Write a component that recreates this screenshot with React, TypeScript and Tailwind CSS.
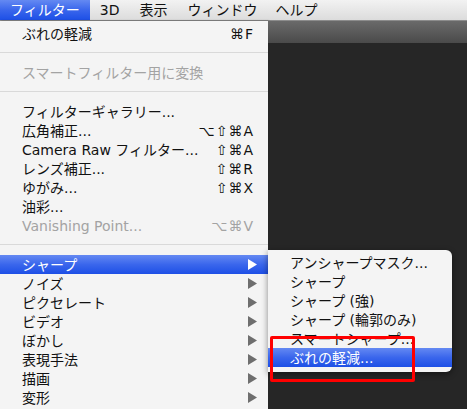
import React from "react";

type Item =
  | { sep: true }
  | { label: string; shortcut?: string; disabled?: boolean; sub?: boolean; active?: boolean; sep?: false };

const mainItems: Item[] = [
  { label: "ぶれの軽減", shortcut: "⌘F" },
  { sep: true },
  { label: "スマートフィルター用に変換", disabled: true },
  { sep: true },
  { label: "フィルターギャラリー..." },
  { label: "広角補正...", shortcut: "⌥⇧⌘A" },
  { label: "Camera Raw フィルター...", shortcut: "⇧⌘A" },
  { label: "レンズ補正...", shortcut: "⇧⌘R" },
  { label: "ゆがみ...", shortcut: "⇧⌘X" },
  { label: "油彩..." },
  { label: "Vanishing Point...", shortcut: "⌥⌘V", disabled: true },
  { sep: true },
  { label: "シャープ", sub: true, active: true },
  { label: "ノイズ", sub: true },
  { label: "ピクセレート", sub: true },
  { label: "ビデオ", sub: true },
  { label: "ぼかし", sub: true },
  { label: "表現手法", sub: true },
  { label: "描画", sub: true },
  { label: "変形", sub: true },
];

const subItems = [
  { label: "アンシャープマスク..." },
  { label: "シャープ" },
  { label: "シャープ (強)" },
  { label: "シャープ (輪郭のみ)" },
  { label: "スマートシャープ..." },
  { label: "ぶれの軽減...", active: true },
];

const font = { fontFamily: '"DejaVu Sans", "Noto Sans CJK JP", sans-serif' };
const blue = "bg-[linear-gradient(180deg,#6489f2_0%,#3a66ec_50%,#1d4fe6_100%)]";

function Arrow({ white }: { white?: boolean }) {
  return (
    <svg width="9" height="11" viewBox="0 0 9 11">
      <path d="M0 0 L9 5.5 L0 11 Z" fill={white ? "#ffffff" : "#6e6e6e"} />
    </svg>
  );
}

function MainMenu() {
  return (
    <div className="w-[268px] shrink-0 bg-[#f4f4f4] pt-[3px] shadow-[1px_0_2px_rgba(0,0,0,0.4)]">
      {mainItems.map((it, i) =>
        it.sep ? (
          <div key={i} className="h-[20px] pt-[9px]">
            <div className="h-px bg-[#d9d9d9]" />
          </div>
        ) : (
          <div
            key={i}
            className={`flex h-[19px] items-center pl-[22px] pr-[11px] text-[14px] leading-none ${
              it.active ? `${blue} text-white` : it.disabled ? "text-[#a3a3a3]" : "text-[#111]"
            }`}
          >
            <span className="flex-1 whitespace-nowrap">{it.label}</span>
            {it.shortcut && <span className="whitespace-nowrap pr-[3px] tracking-[1px]">{it.shortcut}</span>}
            {it.sub && <Arrow white={it.active} />}
          </div>
        )
      )}
    </div>
  );
}

function SubMenu() {
  return (
    <div className="absolute left-[268px] top-[250px] w-[184px] rounded-r-[6px] bg-[#f4f4f4] pt-[3px] pb-[5px] shadow-[0_2px_6px_rgba(0,0,0,0.45)]">
      {subItems.map((it, i) => (
        <div
          key={i}
          className={`flex h-[19px] items-center pl-[22px] text-[14px] leading-none whitespace-nowrap ${
            it.active ? `${blue} text-white` : "text-[#111]"
          }`}
        >
          {it.label}
        </div>
      ))}
    </div>
  );
}

export default function App() {
  const bar = [
    { label: "3D", x: "ml-[10px]" },
    { label: "表示", x: "ml-[20px]" },
    { label: "ウィンドウ", x: "ml-[20px]" },
    { label: "ヘルプ", x: "ml-[18px]" },
  ];
  return (
    <div className="relative flex h-[409px] w-[467px] flex-col overflow-hidden bg-[#262626]" style={font}>
      <div className="flex h-[21px] shrink-0 items-center border-b border-[#8c8c8c] bg-[linear-gradient(180deg,#f2f2f2_0%,#dcdcdc_100%)] text-[14px] text-[#111]">
        <div className={`flex h-full items-center px-[10px] text-white ${blue}`}>フィルター</div>
        {bar.map((b) => (
          <div key={b.label} className={`${b.x} whitespace-nowrap`}>
            {b.label}
          </div>
        ))}
      </div>
      <div className="flex min-h-0 flex-1">
        <MainMenu />
        <div className="flex flex-1 flex-col">
          <div className="h-[22px] bg-[linear-gradient(180deg,#6a6a6a_0%,#4a4a4a_100%)]" />
          <div className="flex-1 bg-[#262626]" />
        </div>
      </div>
      <SubMenu />
      <div className="pointer-events-none absolute left-[270px] top-[336px] h-[46px] w-[145px] rounded-[2px] border-[3px] border-[#ff0000]" />
    </div>
  );
}
